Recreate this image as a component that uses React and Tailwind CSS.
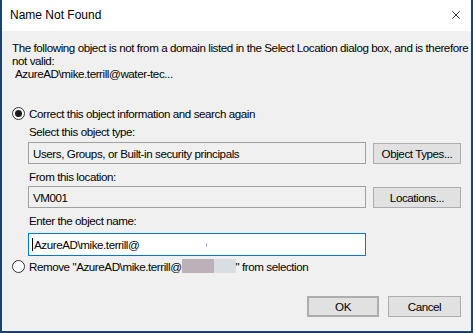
import { X } from "lucide-react";

const font = { fontFamily: '"Liberation Sans", Arial, sans-serif' };

function Radio({ checked }) {
  return (
    <span className="flex h-[13px] w-[13px] shrink-0 items-center justify-center rounded-full border border-[#333] bg-white">
      {checked && <span className="h-[7px] w-[7px] rounded-full bg-[#1a1a1a]" />}
    </span>
  );
}

function Field({ children, className = "" }) {
  return (
    <div className={`flex h-[22px] w-[338px] items-center border border-[#a0a0a0] bg-[#f0f0f0] pl-[4px] ${className}`}>
      {children}
    </div>
  );
}

function Btn({ children, className = "" }) {
  return (
    <button className={`flex h-[21px] items-center justify-center border border-[#adadad] bg-[#e1e1e1] text-black ${className}`}>
      {children}
    </button>
  );
}

export default function App() {
  return (
    <div
      className="flex h-[333px] w-[473px] flex-col border-x-2 border-b-2 border-[#1d4468] bg-[#f0f0f0] text-[11.6px] leading-[13px] tracking-[-0.42px] text-black"
      style={font}
    >
      <div className="flex h-[31px] shrink-0 items-center justify-between bg-white pl-[8px] pr-[8px] tracking-normal">
        <span className="text-[12px]">Name Not Found</span>
        <X className="h-[14px] w-[14px] -translate-y-[1px] text-black" strokeWidth={1.3} />
      </div>

      <div className="flex flex-1 flex-col pl-[10px] pr-[8px] pt-[10px]">
        <p className="whitespace-nowrap leading-[13px]">
          The following object is not from a domain listed in the Select Location dialog box, and is therefore
          <br />
          not valid:
        </p>
        <p className="pl-[3px] leading-[13px]">AzureAD\mike.terrill@water-tec...</p>

        <div className="mt-[26px] flex h-[14px] items-center gap-[4px]">
          <Radio checked />
          <span>Correct this object information and search again</span>
        </div>

        <div className="flex flex-col pl-[16px]">
          <span className="mt-[5px] pl-[1px]">Select this object type:</span>
          <div className="mt-[4px] flex items-center gap-[7px]">
            <Field>Users, Groups, or Built-in security principals</Field>
            <Btn className="w-[88px]">Object Types...</Btn>
          </div>

          <span className="mt-[6px] pl-[1px]">From this location:</span>
          <div className="mt-[3px] flex items-center gap-[7px]">
            <Field>VM001</Field>
            <Btn className="w-[88px]">Locations...</Btn>
          </div>

          <span className="mt-[6px] pl-[1px]">Enter the object name:</span>
          <div className="mt-[6px] flex h-[23px] w-[338px] items-center border border-[#0078d7] bg-white pl-[3px]">
            <span className="mr-[1px] h-[13px] w-px bg-black" />
            <span>AzureAD\mike.terrill@</span>
            <span className="ml-[67px] h-[4px] w-px bg-[#8fb6e6]" />
          </div>
        </div>

        <div className="mt-[3px] flex h-[14px] items-center gap-[4px]">
          <Radio />
          <span className="flex items-center whitespace-pre">
            Remove "AzureAD\mike.terrill@
            <span className="h-[14px] w-[32px] bg-[#bcb1b8]" />
            <span className="h-[14px] w-[22px] bg-[#dadde1]" />
            " from selection
          </span>
        </div>

        <div className="mt-[23px] flex justify-end gap-[9px] pr-[2px]">
          <Btn className="h-[20px] w-[72px] border-2 border-[#0078d7]">OK</Btn>
          <Btn className="h-[20px] w-[73px]">Cancel</Btn>
        </div>
      </div>
    </div>
  );
}
